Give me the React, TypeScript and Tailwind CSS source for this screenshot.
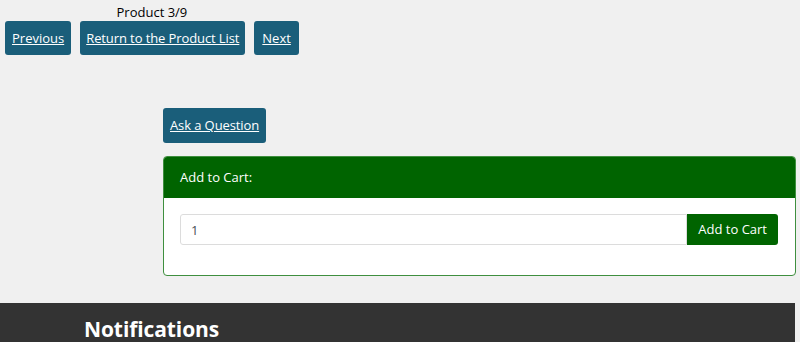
export default function App() {
  return (
    <div
      className="min-h-[342px] w-[800px] overflow-hidden bg-[#f0f0f0] text-[15px] text-black"
      style={{ fontFamily: '"Open Sans", "Noto Sans", sans-serif' }}
    >
      <div className="inline-flex flex-col items-center pl-[5px]">
        <div className="h-[20px] pt-[1px] text-[13px] leading-[20px]">Product 3/9</div>
        <div className="flex gap-[9px]">
          <a href="#" className="rounded-[3px] bg-[#1a5e7a] px-[7px] py-[7px] text-[13px] leading-[20px] text-white underline">
            Previous
          </a>
          <a href="#" className="rounded-[3px] bg-[#1a5e7a] px-[6px] py-[7px] text-[13px] leading-[20px] tracking-[-0.1px] text-white underline">
            Return to the Product List
          </a>
          <a href="#" className="rounded-[3px] bg-[#1a5e7a] px-[8px] py-[7px] text-[13px] leading-[20px] text-white underline">
            Next
          </a>
        </div>
      </div>

      <div className="ml-[163px] mr-[4px] mt-[53px]">
        <a href="#" className="inline-block rounded-[3px] bg-[#1a5e7a] px-[7px] py-[7px] text-[13px] leading-[21px] tracking-[-0.1px] text-white underline">
          Ask a Question
        </a>

        <div className="mt-[13px] overflow-hidden rounded-[4px] border border-[#3f8f3f] bg-white">
          <div className="flex h-[41px] items-center bg-[#006400] px-[16px] text-[13px] text-white">Add to Cart:</div>
          <div className="px-[16px] pt-[16px] pb-[30px]">
            <div className="flex w-[598px]">
              <input
                defaultValue="1"
                className="h-[31px] flex-1 rounded-l-[3px] border border-[#dcdcdc] px-[10px] text-[13px] text-[#495057] outline-none"
              />
              <button className="h-[31px] rounded-r-[3px] bg-[#006400] px-[11px] text-[13px] text-white">Add to Cart</button>
            </div>
          </div>
        </div>
      </div>

      <div className="mt-[27px] mr-[5px] h-[40px] bg-[#333333] pl-[84px] pt-[12px]">
        <h2 className="text-[21px] font-bold leading-[28px] tracking-[-0.1px] text-white">Notifications</h2>
      </div>
    </div>
  );
}
